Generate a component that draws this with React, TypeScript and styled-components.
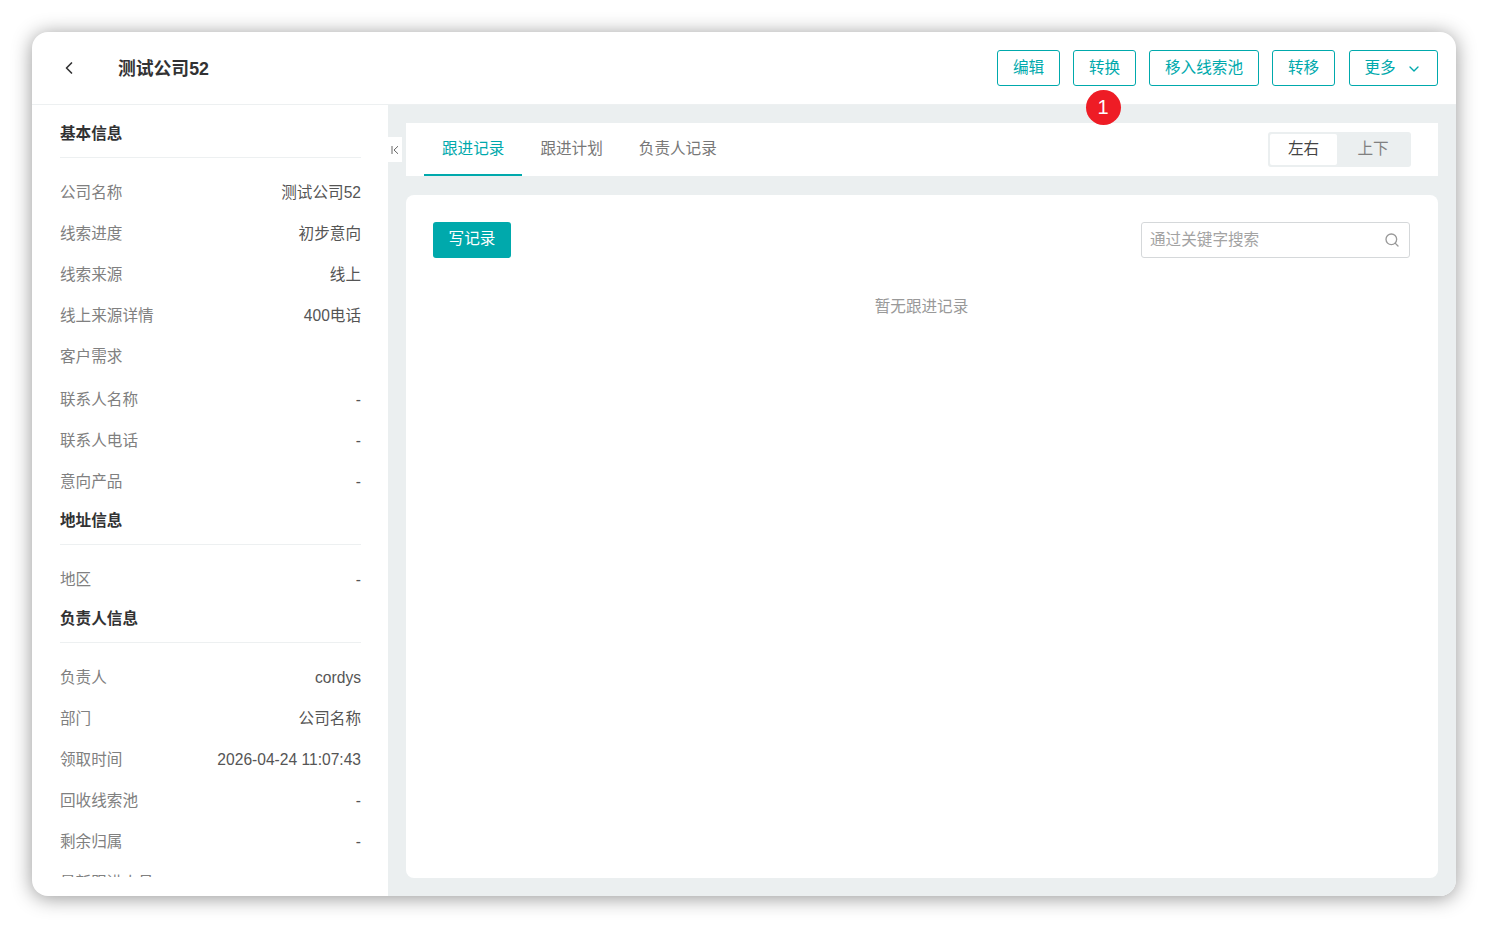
import React from 'react';
import styled, { createGlobalStyle } from 'styled-components';
import { ChevronLeft, ChevronDown, Search } from 'lucide-react';

const teal = '#00a9ac';

const GlobalStyle = createGlobalStyle`
    html, body {
        margin: 0;
        background: #fff;
        font-family: "Liberation Sans", "Noto Sans CJK SC", sans-serif;
    }
    * {
        box-sizing: border-box;
    }
`;

type Row = { label: string; value: string };
type Section = { title: string; rows: Row[] };

const sections: Section[] = [
    {
        title: '基本信息',
        rows: [
            { label: '公司名称', value: '测试公司52' },
            { label: '线索进度', value: '初步意向' },
            { label: '线索来源', value: '线上' },
            { label: '线上来源详情', value: '400电话' },
            { label: '客户需求', value: '' },
            { label: '联系人名称', value: '-' },
            { label: '联系人电话', value: '-' },
            { label: '意向产品', value: '-' },
        ],
    },
    { title: '地址信息', rows: [{ label: '地区', value: '-' }] },
    {
        title: '负责人信息',
        rows: [
            { label: '负责人', value: 'cordys' },
            { label: '部门', value: '公司名称' },
            { label: '领取时间', value: '2026-04-24 11:07:43' },
            { label: '回收线索池', value: '-' },
            { label: '剩余归属', value: '-' },
            { label: '最新跟进人员', value: '-' },
        ],
    },
];

const actions = [
    { label: '编辑', width: 63 },
    { label: '转换', width: 63 },
    { label: '移入线索池', width: 110 },
    { label: '转移', width: 63 },
];

const tabs = ['跟进记录', '跟进计划', '负责人记录'];

export default function App() {
    return (
        <Page>
            <GlobalStyle />
            <Shell>
                <Header>
                    <BackButton>
                        <ChevronLeft size={20} strokeWidth={2} />
                    </BackButton>
                    <Title>测试公司52</Title>
                    <Actions>
                        {actions.map((a) => (
                            <ActionButton key={a.label} $width={a.width}>
                                {a.label}
                            </ActionButton>
                        ))}
                        <MoreButton>
                            更多
                            <ChevronDown size={16} strokeWidth={2} />
                        </MoreButton>
                    </Actions>
                    <Badge>1</Badge>
                </Header>
                <Body>
                    <Sidebar>
                        {sections.map((s) => (
                            <div key={s.title}>
                                <SectionTitle>{s.title}</SectionTitle>
                                <RowList>
                                    {s.rows.map((r) => (
                                        <InfoRow key={r.label} $blank={r.value === ''}>
                                            <InfoLabel>{r.label}</InfoLabel>
                                            <InfoValue>{r.value}</InfoValue>
                                        </InfoRow>
                                    ))}
                                </RowList>
                            </div>
                        ))}
                    </Sidebar>
                    <Main>
                        <CollapseTab>
                            <svg width="10" height="10" viewBox="0 0 10 10" fill="none" stroke="#666" strokeWidth="1">
                                <path d="M2 1v8M8 1.2 4 5l4 3.8" />
                            </svg>
                        </CollapseTab>
                        <TabBar>
                            <Tabs>
                                {tabs.map((t, i) => (
                                    <Tab key={t} $active={i === 0}>
                                        {t}
                                    </Tab>
                                ))}
                            </Tabs>
                            <Segmented>
                                <Segment $active>左右</Segment>
                                <Segment>上下</Segment>
                            </Segmented>
                        </TabBar>
                        <Card>
                            <Toolbar>
                                <PrimaryButton>写记录</PrimaryButton>
                                <SearchBox>
                                    <SearchText>通过关键字搜索</SearchText>
                                    <Search size={16} color="#999" strokeWidth={2} />
                                </SearchBox>
                            </Toolbar>
                            <Empty>暂无跟进记录</Empty>
                        </Card>
                    </Main>
                </Body>
            </Shell>
        </Page>
    );
}

const Page = styled.div`
    width: 1488px;
    height: 928px;
    padding: 32px;
    overflow: hidden;
`;

const Shell = styled.div`
    width: 1424px;
    height: 864px;
    border-radius: 16px;
    overflow: hidden;
    background: #fff;
    box-shadow: 0 2px 20px rgba(0, 0, 0, 0.42);
    display: flex;
    flex-direction: column;
`;

const Header = styled.header`
    position: relative;
    height: 73px;
    flex: none;
    display: flex;
    align-items: flex-start;
    padding: 18px 18px 0 27px;
    border-bottom: 1px solid #edf0f1;
`;

const BackButton = styled.div`
    width: 59px;
    height: 36px;
    display: flex;
    align-items: center;
    color: #323233;
`;

const Title = styled.h1`
    margin: 0;
    line-height: 38px;
    font-size: 17.8px;
    font-weight: 700;
    color: #323233;
`;

const Actions = styled.div`
    margin-left: auto;
    display: flex;
    gap: 13px;
`;

const ActionButton = styled.div<{ $width: number }>`
    width: ${(p) => p.$width}px;
    height: 36px;
    display: flex;
    align-items: center;
    justify-content: center;
    border: 1px solid ${teal};
    border-radius: 3px;
    color: ${teal};
    font-size: 15.6px;
    line-height: 32px;
`;

const MoreButton = styled(ActionButton).attrs({ $width: 89 })`
    gap: 10px;
    margin-left: 1px;
    padding-right: 1px;
    & > svg {
        margin-top: 2px;
    }
`;

const Badge = styled.div`
    position: absolute;
    left: 1053.5px;
    top: 58px;
    width: 35px;
    height: 35px;
    border-radius: 50%;
    background: #ee1c25;
    color: #fff;
    font-family: "Liberation Sans", Arial, sans-serif;
    font-size: 20px;
    font-weight: 400;
    line-height: 35px;
    text-align: center;
    z-index: 2;
`;

const Body = styled.div`
    flex: 1;
    min-height: 0;
    display: flex;
`;

const Sidebar = styled.aside`
    width: 356px;
    flex: none;
    height: 772px;
    overflow: hidden;
    padding: 10px 27px 0 28px;
`;

const SectionTitle = styled.div`
    height: 43px;
    border-bottom: 1px solid #edf0f1;
    line-height: 38px;
    font-size: 15.6px;
    font-weight: 700;
    color: #323233;
`;

const RowList = styled.div`
    padding-top: 14px;
    display: flex;
    flex-direction: column;
`;

const InfoRow = styled.div<{ $blank?: boolean }>`
    height: ${(p) => (p.$blank ? '43px' : '41px')};
    display: flex;
    align-items: ${(p) => (p.$blank ? 'flex-start' : 'center')};
    justify-content: space-between;
    font-size: 15.6px;
    line-height: 41px;
`;

const InfoLabel = styled.span`
    color: #808080;
`;

const InfoValue = styled.span`
    color: #555;
`;

const Main = styled.main`
    position: relative;
    flex: 1;
    min-width: 0;
    background: #ebeff0;
    padding: 18px;
    display: flex;
    flex-direction: column;
    gap: 19px;
`;

const CollapseTab = styled.div`
    position: absolute;
    left: 0;
    top: 32px;
    width: 14px;
    height: 25px;
    background: #fff;
    display: flex;
    align-items: center;
    justify-content: center;
`;

const TabBar = styled.div`
    height: 53px;
    flex: none;
    background: #fff;
    display: flex;
    align-items: flex-start;
    justify-content: space-between;
    padding: 0 27px 0 18px;
`;

const Tabs = styled.div`
    display: flex;
`;

const Tab = styled.div<{ $active?: boolean }>`
    height: 53px;
    padding: 0 18px;
    line-height: 51px;
    font-size: 15.6px;
    color: ${(p) => (p.$active ? teal : '#777')};
    border-bottom: 2px solid ${(p) => (p.$active ? teal : 'transparent')};
`;

const Segmented = styled.div`
    margin-top: 9px;
    width: 143px;
    height: 35px;
    padding: 2px;
    border-radius: 3px;
    background: #ebeff0;
    display: flex;
`;

const Segment = styled.div<{ $active?: boolean }>`
    width: ${(p) => (p.$active ? '67px' : '72px')};
    height: 31px;
    border-radius: 2px;
    line-height: 29px;
    text-align: center;
    font-size: 15.6px;
    background: ${(p) => (p.$active ? '#fff' : 'transparent')};
    color: ${(p) => (p.$active ? '#444' : '#808080')};
`;

const Card = styled.section`
    flex: 1;
    background: #fff;
    border-radius: 8px;
    padding: 27px 28px 0 27px;
`;

const Toolbar = styled.div`
    display: flex;
    justify-content: space-between;
`;

const PrimaryButton = styled.div`
    width: 78px;
    height: 36px;
    background: ${teal};
    border-radius: 3px;
    color: #fff;
    font-size: 15.6px;
    line-height: 34px;
    text-align: center;
`;

const SearchBox = styled.div`
    width: 269px;
    height: 36px;
    border: 1px solid #d5d8da;
    border-radius: 3px;
    display: flex;
    align-items: center;
    justify-content: space-between;
    padding: 0 9px 0 8px;
`;

const SearchText = styled.span`
    font-size: 15.6px;
    line-height: 32px;
    color: #a3a3a3;
`;

const Empty = styled.div`
    margin-top: 37px;
    text-align: center;
    line-height: 24px;
    font-size: 15.6px;
    color: #999;
`;
